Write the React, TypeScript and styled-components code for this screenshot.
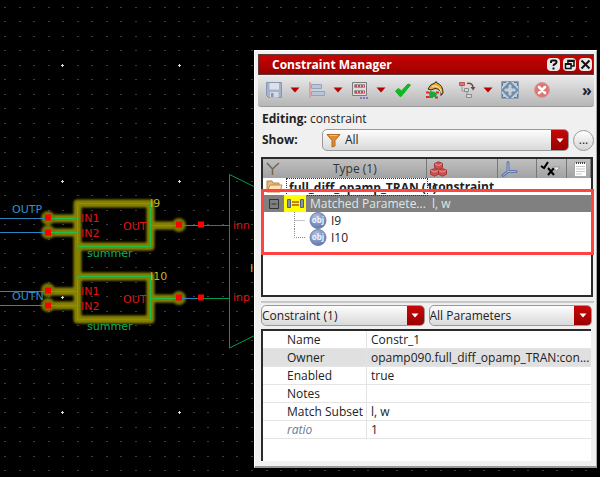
import React from "react";
import styled, { createGlobalStyle, css } from "styled-components";

const GlobalStyle = createGlobalStyle`
  *, *::before, *::after { box-sizing: border-box; }
  body {
    margin: 0;
    background: #000;
    color: #222;
    font: 12px/16px "Open Sans", "Noto Sans", sans-serif;
  }
  button, select { font: inherit; color: inherit; }
  button { padding: 0; border: 0; background: none; }
`;

/* ---------- Desktop and schematic ---------- */

const Desktop = styled.main`
  position: relative;
  display: grid;
  grid-template-columns: minmax(0, 1fr);
  min-height: 100vh;
  padding: 50px 3px 10px 254px;
  overflow: hidden;
`;

const Canvas = styled.svg`
  position: absolute;
  inset: 0;
  width: 100%;
  height: 100%;
  font: 11px "DejaVu Sans", sans-serif;
`;

const gridDots = (() => {
  let d = "";
  for (let row = 0; row < 75; row++) {
    for (let col = 0; col < 132; col++) {
      d += `M${Math.round(4 + col * 14.53)} ${Math.round(7 + row * 14.47) + 0.5}h2`;
    }
  }
  return d;
})();

const majorDots = (() => {
  let d = "";
  for (let row = 0; row < 9; row++) {
    for (let col = 0; col < 16; col++) {
      const x = Math.round(62 + col * 116.5);
      const y = Math.round(65 + row * 115.8);
      d += `M${x - 1} ${y + 0.5}h3M${x + 0.5} ${y - 1}v3`;
    }
  }
  return d;
})();

function Summer({ y, name }: { y: number; name: string }) {
  const shape = `M77.5 ${y}h73v43h-73zM48 ${y + 15}h29M48 ${y + 29}h29M150 ${y + 22}h29`;
  return (
    <g>
      <path d={`M0 ${y + 15}h48M0 ${y + 29}h48M179 ${y + 22}h22`} stroke="#2c86c0" fill="none" />
      <path d={`M201 ${y + 22}h28`} stroke="#009a4c" />
      <path d={shape} stroke="#1fbe4a" fill="none" />
      <g fill="#f00">
        <rect x="45" y={y + 11} width="6" height="6" />
        <rect x="45" y={y + 26} width="6" height="6" />
        <rect x="176" y={y + 18} width="6" height="6" />
        <rect x="198" y={y + 18} width="6" height="6" />
      </g>
      <g fill="#e01414">
        <text x="81" y={y + 18}>IN1</text>
        <text x="81" y={y + 33}>IN2</text>
        <text x="123" y={y + 26}>OUT</text>
      </g>
      <text x="87" y={y + 53} fill="#10b054">summer</text>
      <text x="150" y={y + 3} fill="#c4b61c">{name}</text>
    </g>
  );
}

const glowShape = [203.5, 276.5]
  .map((y) => `M77.5 ${y}h73v43h-73zM48 ${y + 15}h29M48 ${y + 29}h29M150 ${y + 22}h29`)
  .join("") + "M77.5 246v30";

const glowPins = [
  [48, 218], [48, 232], [48, 290], [48, 305], [179, 225], [179, 298],
];

function Schematic() {
  return (
    <Canvas aria-label="Schematic">
      <defs>
        <filter id="halo" x="-10%" y="-10%" width="120%" height="120%">
          <feGaussianBlur stdDeviation="1.3" />
        </filter>
      </defs>
      <path d={gridDots} stroke="#3d3d47" />
      <path d={majorDots} stroke="#dcdcdc" />
      <g filter="url(#halo)">
        <path d={glowShape} stroke="#868200" strokeWidth="8" strokeLinejoin="round" fill="none" />
        {glowPins.map(([cx, cy]) => (
          <circle key={`${cx}-${cy}`} cx={cx} cy={cy} r="7" fill="#7a7600" />
        ))}
      </g>
      <path d="M229.5 174.500V348L405 261z" stroke="#009a4c" fill="none" />
      <Summer y={203.5} name="I9" />
      <Summer y={276.5} name="I10" />
      <g fill="#3490c8">
        <text x="12" y="213">OUTP</text>
        <text x="12" y="300">OUTN</text>
      </g>
      <g fill="#e01414">
        <text x="233" y="229">inn</text>
        <text x="233" y="301">inp</text>
      </g>
      <text x="250" y="272" fill="#c4b61c">I</text>
    </Canvas>
  );
}

/* ---------- Window frame ---------- */

const Window = styled.section`
  position: relative;
  display: flex;
  flex-direction: column;
  min-width: 0;
  padding: 3px 2px 5px 3px;
  background: #f0f0f0;
  border: 1px solid #fff;
  border-right-color: #aaa;
  border-bottom: 2px solid #999;
`;

const TitleBar = styled.header`
  display: flex;
  align-items: center;
  gap: 3px;
  height: 21px;
  padding: 0 1px 0 13px;
  background: linear-gradient(#c80404, #9c0000);
  border: 1px solid #5e3a3a;
`;

const Title = styled.h1`
  flex: 1;
  margin: 0;
  font-size: 12px;
  line-height: 19px;
  color: #fff;
`;

const TitleButton = styled.button`
  display: grid;
  place-items: center;
  width: 13px;
  height: 13px;
  border-radius: 4px;
  background: #e8e8e8;
`;

const ToolBar = styled.div`
  display: flex;
  align-items: center;
  gap: 8px;
  height: 31px;
  margin-top: 1px;
  padding: 0 2px 2px 7px;
  background: linear-gradient(#e8e8e8, #b6b6b6);
  border-bottom: 1px solid #9a9a9a;
  border-radius: 3px;
`;

const ToolGroup = styled.div`
  display: flex;
  align-items: center;
  gap: 7px;
`;

const ToolButton = styled.button<{ $apart?: boolean }>`
  display: block;
  width: 18px;
  height: 18px;
  margin-left: ${(p) => (p.$apart ? "6px" : "0")};
`;

const MenuButton = styled.button`
  display: grid;
  place-items: center;
  width: 10px;
  height: 18px;
`;

const MoreButton = styled.button`
  margin-left: auto;
  width: 10px;
  font-size: 16px;
  font-weight: bold;
`;

const Glyph = styled.svg`
  display: block;
  flex: none;
`;

function ToolMenu({ label }: { label: string }) {
  return (
    <MenuButton aria-label={label}>
      <Glyph width="10" height="6"><path d="M.5 .5h9L5 5.500z" fill="#b80000" /></Glyph>
    </MenuButton>
  );
}

/* ---------- Fields ---------- */

const Info = styled.p`
  margin: 4px 0 0 4px;
  line-height: 16px;
`;

const FilterRow = styled.div`
  display: flex;
  align-items: center;
  gap: 4px;
  margin: 2px 0 0 4px;
`;

const FieldLabel = styled.label`
  width: 56px;
  font-weight: bold;
`;

const Combo = styled.div<{ $icon?: boolean }>`
  flex: 1;
  min-width: 0;
  display: grid;
  grid-template-columns: ${(p) => (p.$icon ? "21px" : "0")} minmax(0, 1fr) 17px;
  align-items: center;
  height: ${(p) => (p.$icon ? "22px" : "21px")};
  background: linear-gradient(#fdfdfd, #d9d9d9);
  border: 1px solid #999;
  border-radius: 5px;
  overflow: hidden;

  select {
    grid-area: 1 / 1 / 2 / 4;
    height: 100%;
    padding: 0 0 0 ${(p) => (p.$icon ? "22px" : "0")};
    background: none;
    border: 0;
    appearance: none;
  }
`;

const ComboIcon = styled.span`
  grid-area: 1 / 1;
  justify-self: center;
  pointer-events: none;
`;

const ComboArrow = styled.span`
  grid-area: 1 / 3;
  display: grid;
  place-items: center;
  height: 100%;
  background: linear-gradient(#c80808, #990000);
  pointer-events: none;
`;

const BrowseButton = styled.button`
  width: 21px;
  height: 21px;
  border: 1px solid #999;
  border-radius: 50%;
  background: linear-gradient(#fff, #d4d4d4);
  line-height: 18px;
`;

function DropArrow() {
  return (
    <ComboArrow>
      <Glyph width="8" height="5"><path d="M.5 .5h7L4 4.500z" fill="#fff" /></Glyph>
    </ComboArrow>
  );
}

/* ---------- Tables ---------- */

const frame = css`
  border: 1px solid #555;
  border-top: 2px solid #2b2b2b;
  border-left: 2px solid #2b2b2b;
  background: #fff;
`;

const TreeFrame = styled.div`
  ${frame}
  position: relative;
  height: 140px;
  margin: 6px 1px 0 3px;
  border-bottom: 2px solid #2b2b2b;
  border-right: 2px solid #2b2b2b;
`;

const Table = styled.table`
  width: 100%;
  table-layout: fixed;
  border-collapse: separate;
  border-spacing: 0;

  th, td {
    padding: 0;
    font-weight: normal;
    text-align: left;
    white-space: nowrap;
  }
`;

const HeadCell = styled.th<{ $width?: number }>`
  width: ${(p) => (p.$width ? `${p.$width}px` : "auto")};
  height: 19px;
  background: linear-gradient(#c0c0c0, #a2a2a2);
  border-right: 1px solid #777;
  color: #333;
`;

const HeadBody = styled.div<{ $middle?: boolean }>`
  display: flex;
  align-items: center;
  gap: 53px;
  height: 19px;
  padding-left: 3px;
  justify-content: ${(p) => (p.$middle ? "center" : "flex-start")};
`;

const TreeRow = styled.tr<{ $selected?: boolean; $folder?: boolean }>`
  height: 17px;
  line-height: 17px;
  color: ${(p) => (p.$selected ? "#dce8e4" : "#222")};
  background: ${(p) => (p.$selected ? "#808080" : "#fff")};

  && td { font-weight: ${(p) => (p.$folder ? "bold" : "normal")}; }
`;

const TreeItem = styled.div<{ $depth: number }>`
  display: flex;
  align-items: center;
  gap: 4px;
  height: 17px;
  padding-left: ${(p) => [3, 4, 30][p.$depth]}px;
`;

const FolderName = styled.span`
  flex: 1;
  min-width: 0;
  height: 16px;
  padding-left: 2px;
  outline: 1px dotted #333;
`;

const MatchBadge = styled.span`
  display: grid;
  place-items: center;
  flex: none;
  width: 22px;
  height: 17px;
  background: #ffff00;
`;

const Expander = styled.button`
  flex: none;
  width: 13px;
  height: 13px;
`;

const Value = styled.td`
  && { padding-left: 5px; }
`;

const Highlight = styled.div`
  position: absolute;
  top: 30px;
  left: -2px;
  right: -3px;
  height: 66px;
  border: 3px solid #ff4242;
  pointer-events: none;
`;

const Splitter = styled.div`
  height: 2px;
  margin: 4px 0 2px 3px;
  background: #c8c8c8;
`;

const ComboPair = styled.div`
  display: flex;
  gap: 4px;
  margin: 0 2px 0 3px;
`;

const PropertyFrame = styled.div`
  ${frame}
  flex: 1;
  min-height: 132px;
  margin: 3px 3px 0 3px;
  border-right: 0;
  border-bottom: 0;
`;

const PropertyRow = styled.tr<{ $shaded?: boolean }>`
  height: 18px;
  background: ${(p) => (p.$shaded ? "#e0e0e0" : "#fff")};

  && th, && td { border-bottom: 1px solid #e4e4e4; line-height: 17px; }
  && td { padding-left: 4px; overflow: hidden; text-overflow: ellipsis; }
`;

const PropertyName = styled.th<{ $custom?: boolean }>`
  width: 104px;
  && { padding-left: 24px; }
  border-right: 1px solid #e4e4e4;
  color: ${(p) => (p.$custom ? "#607d98" : "inherit")};
  font-style: ${(p) => (p.$custom ? "italic" : "normal")};
`;

function ObjectIcon() {
  return (
    <Glyph width="18" height="17" aria-hidden="true">
      <defs>
        <radialGradient id="ball" cx=".4" cy=".3" r=".7">
          <stop offset="0" stopColor="#b4c2e0" />
          <stop offset="1" stopColor="#6179ab" />
        </radialGradient>
      </defs>
      <circle cx="9" cy="8.500" r="8" fill="url(#ball)" stroke="#7185ae" />
      <text x="9" y="11" fontSize="8" fontWeight="bold" textAnchor="middle" fill="#eef2fb">obj</text>
    </Glyph>
  );
}

function Branch({ last }: { last?: boolean }) {
  return (
    <Glyph width="12" height="17" aria-hidden="true">
      <path d={last ? "M1.500 0v8.500H12" : "M1.500 0v17M1.500 8.500H12"} fill="none" stroke="#888" strokeDasharray="1 1" />
    </Glyph>
  );
}

const properties = [
  { name: "Name", value: "Constr_1" },
  { name: "Owner", value: "opamp090.full_diff_opamp_TRAN:con...", shaded: true },
  { name: "Enabled", value: "true" },
  { name: "Notes", value: "" },
  { name: "Match Subset", value: "l, w" },
  { name: "ratio", value: "1", custom: true },
];

export default function App() {
  return (
    <Desktop>
      <GlobalStyle />
      <Schematic />
      <Window aria-label="Constraint Manager">
        <TitleBar>
          <Title>Constraint Manager</Title>
          <TitleButton aria-label="Help">
            <Glyph width="11" height="11"><path d="M3 4V2.500Q3 1.500 4.500 1.500H7Q8.500 1.500 8.500 3T7 5Q5.500 5.300 5.500 7M5.500 8.500v2" fill="none" stroke="#111" strokeWidth="2" /></Glyph>
          </TitleButton>
          <TitleButton aria-label="Restore">
            <Glyph width="11" height="11"><path d="M4 4V1.500h6V7H7.500M1.500 5h5.500v4.500H1.500z" fill="none" stroke="#111" strokeWidth="1.500" /><path d="M3.500 1h7v2h-7zM1 4h6.500v2H1z" fill="#111" /></Glyph>
          </TitleButton>
          <TitleButton aria-label="Close">
            <Glyph width="11" height="11"><path d="M1.500 1.500l8 8M9.500 1.500l-8 8" stroke="#111" strokeWidth="2" /></Glyph>
          </TitleButton>
        </TitleBar>

        <ToolBar role="toolbar">
          <ToolGroup>
            <ToolButton aria-label="Save">
              <Glyph width="18" height="18">
                <path d="M1.500 1.500h15v15h-13l-2-2z" fill="#a5b2c9" stroke="#8797b3" />
                <path d="M4.500 2h9.500v6.500H4.500z" fill="#dde2ea" />
                <path d="M5 11h8.500v5.500H5z" fill="#d6dce6" /><path d="M6 12h2.500v4H6z" fill="#8797b3" />
              </Glyph>
            </ToolButton>
            <ToolMenu label="Save options" />
          </ToolGroup>
          <ToolGroup>
            <ToolButton aria-label="Align">
              <Glyph width="18" height="18">
                <path d="M2 1v16" stroke="#d9a3a5" strokeWidth="2" />
                <path d="M3.500 3.500h10v4h-10zM3.500 10.500h13v4h-13z" fill="#b9c5d8" stroke="#94a3bc" />
              </Glyph>
            </ToolButton>
            <ToolMenu label="Align options" />
          </ToolGroup>
          <ToolGroup>
            <ToolButton aria-label="Constraint groups">
              <Glyph width="18" height="18">
                <path d="M1.500 1.500h14v13h-14z" fill="#dedede" stroke="#7b7b7b" />
                <path d="M3.500 3.500h10v3h-10zM3.500 9.500h10v3h-10z" fill="#c9c9c9" stroke="#999" />
                <path d="M4 5h10M4 11h10" stroke="#c8485a" strokeWidth="2" strokeDasharray="2 1" />
                <path d="M9 17h9" stroke="#7a7ad0" strokeWidth="2" strokeDasharray="2 1" />
              </Glyph>
            </ToolButton>
            <ToolMenu label="Constraint group options" />
          </ToolGroup>
          <ToolButton aria-label="Apply">
            <Glyph width="18" height="18"><path d="M1.500 10l3-2.500 3 2.500L14 3l2.500 1-9 11-1.500.5z" fill="#10ba20" stroke="#0ab31b" strokeLinejoin="round" /></Glyph>
          </ToolButton>
          <ToolButton aria-label="Find" $apart>
            <Glyph width="18" height="18">
              <path d="M2 8Q4 3 9 2l1-1.500 1 1.500Q17 4 17 12l-2 2.500V11Q13 7 9 7.500L5 9z" fill="#e9ad3e" stroke="#35290e" />
              <path d="M6 5.500Q10 3.500 14 8l1.500 4" fill="none" stroke="#fff0a5" />
              <path d="M4 10l5 1 2 2-1 3H5l-2-2z" fill="#19a83b" />
              <path d="M0 11.500h3M0 16h3M10 11.500h3M9 16.500h3" stroke="#df2929" strokeWidth="2" />
              <path d="M3 12h3M3 16h4" stroke="#19a83b" strokeWidth="2" />
            </Glyph>
          </ToolButton>
          <ToolGroup>
            <ToolButton aria-label="Hierarchy" $apart>
              <Glyph width="18" height="18">
                <path d="M4 5v5h3M9 11v4h3" fill="none" stroke="#999" />
                <path d="M1.500 1.500h5v3h-5z" fill="#d97777" stroke="#c44e4e" />
                <path d="M6.500 7.500h4v3h-4zM8.500 13.500h5v3h-5z" fill="#d8d8d8" stroke="#8c8c8c" />
                <path d="M9 2.500Q15 1.500 15 7" fill="none" stroke="#6e4b4b" strokeWidth="1.500" /><path d="M12.500 6h5L15 9.500z" fill="#6e4b4b" />
              </Glyph>
            </ToolButton>
            <ToolMenu label="Hierarchy options" />
          </ToolGroup>
          <ToolButton aria-label="Zoom to fit">
            <Glyph width="18" height="18">
              <path d="M.5 .5h17v17H.5z" fill="#c3ced9" stroke="#8da2b9" />
              <path d="M9 1.500l7.500 7.500-7.500 7.500L1.500 9z" fill="none" stroke="#6f8cab" strokeWidth="2" />
              <path d="M6 7.500V6h1.500M10.500 6H12v1.500M12 10.500V12h-1.500M7.500 12H6v-1.500" fill="none" stroke="#6f8cab" strokeWidth="2" />
              <path d="M1.500 5V1.500H5M13 1.500h3.500V5M1.500 13v3.500H5M13 16.500h3.500V13" fill="none" stroke="#5c7898" />
            </Glyph>
          </ToolButton>
          <ToolButton aria-label="Delete" $apart>
            <Glyph width="18" height="18">
              <circle cx="9" cy="9" r="7.500" fill="#dc7777" stroke="#d99b9b" />
              <path d="M6 6l6 6M12 6l-6 6" stroke="#fff" strokeWidth="2.500" strokeLinecap="round" />
            </Glyph>
          </ToolButton>
          <MoreButton aria-label="More tools">»</MoreButton>
        </ToolBar>

        <Info><b>Editing:</b> constraint</Info>
        <FilterRow>
          <FieldLabel htmlFor="show">Show:</FieldLabel>
          <Combo $icon>
            <ComboIcon>
              <Glyph width="15" height="15"><path d="M1 1.500h13L9 7.500V13l-3 1V7.500z" fill="#dc8b35" stroke="#b96b20" /><path d="M3.500 2.500h8" stroke="#f4bf7c" /></Glyph>
            </ComboIcon>
            <select id="show" defaultValue="All"><option>All</option></select>
            <DropArrow />
          </Combo>
          <BrowseButton aria-label="Browse filters">...</BrowseButton>
        </FilterRow>

        <TreeFrame>
          <Table>
            <thead>
              <tr>
                <HeadCell>
                  <HeadBody>
                    <Glyph width="14" height="14"><path d="M1 1l5.500 6V13M13 1L6.500 7" fill="none" stroke="#75644e" strokeWidth="1.500" /></Glyph>
                    Type (1)
                  </HeadBody>
                </HeadCell>
                <HeadCell $width={71} aria-label="Parameters">
                  <HeadBody>
                    <Glyph width="17" height="16">
                      <g fill="#c85252" stroke="#a53838">
                        <path d="M8.500 .8l4 1.700v4l-4 2-4-2v-4z" /><path d="M4.500 7.500l4 1.700v4l-4 2-4-2v-4z" /><path d="M12.500 7.500l4 1.700v4l-4 2-4-2v-4z" />
                      </g>
                      <path d="M5 3l3.500 1.500L12 3M1 9.500L4.500 11 8 9.500M9 9.500l3.500 1.500L16 9.500" fill="none" stroke="#ee9999" />
                    </Glyph>
                  </HeadBody>
                </HeadCell>
                <HeadCell $width={39} aria-label="Axes">
                  <HeadBody>
                    <Glyph width="17" height="16"><path d="M7 1.500v9M7 10.500l8 0M7 10.500l-5 4" stroke="#6179aa" strokeWidth="3" strokeLinecap="round" /><path d="M7 1.500v9h8M7 10.500l-5 4" fill="none" stroke="#a3b7dc" /></Glyph>
                  </HeadBody>
                </HeadCell>
                <HeadCell $width={30} aria-label="Status">
                  <HeadBody>
                    <Glyph width="22" height="16"><path d="M1 5l3 2 4-6M8 7l6 7M14 7l-6 7" fill="none" stroke="#000" strokeWidth="2" /><path d="M13 6h7l-3.500 4z" fill="#eee" stroke="#999" /></Glyph>
                  </HeadBody>
                </HeadCell>
                <HeadCell $width={24} aria-label="Notes">
                  <HeadBody $middle>
                    <Glyph width="13" height="16"><path d="M.5 1.500h12v14H.5z" fill="#fff" stroke="#aaa" /><path d="M2 2h10" stroke="#444" strokeWidth="2" strokeDasharray="1 1" /><path d="M2 5.500h9M2 8h9M2 10.500h9M2 13h6" stroke="#c8c8c8" /></Glyph>
                  </HeadBody>
                </HeadCell>
              </tr>
            </thead>
            <tbody>
              <TreeRow $folder>
                <td>
                  <TreeItem $depth={0}>
                    <Glyph width="17" height="15"><path d="M1 13V2h5l1 2h6v4" fill="#e7b878" stroke="#b9854b" /><path d="M1 13l3-7h12l-2 7z" fill="#ffe0ae" stroke="#bd894e" /></Glyph>
                    <FolderName>full_diff_opamp_TRAN (1)</FolderName>
                  </TreeItem>
                </td>
                <Value colSpan={4}>constraint</Value>
              </TreeRow>
              <TreeRow $selected>
                <td>
                  <TreeItem $depth={1}>
                    <Expander aria-label="Collapse">
                      <Glyph width="13" height="13"><path d="M2.500 2.500h9v9h-9zM4.500 7h5" fill="none" stroke="#333" /></Glyph>
                    </Expander>
                    <MatchBadge>
                      <Glyph width="17" height="10"><path d="M.5 .5h3v8h-3zM13.500 .5h3v8h-3z" fill="#8893a8" stroke="#555d70" /><path d="M5 3h7M5 6h7" stroke="#b35b12" strokeWidth="1.500" /></Glyph>
                    </MatchBadge>
                    Matched Paramete...
                  </TreeItem>
                </td>
                <Value colSpan={4}>l, w</Value>
              </TreeRow>
              <TreeRow>
                <td><TreeItem $depth={2}><Branch /><ObjectIcon />I9</TreeItem></td>
                <td colSpan={4} />
              </TreeRow>
              <TreeRow>
                <td><TreeItem $depth={2}><Branch last /><ObjectIcon />I10</TreeItem></td>
                <td colSpan={4} />
              </TreeRow>
            </tbody>
          </Table>
          <Highlight />
        </TreeFrame>

        <Splitter />
        <ComboPair>
          <Combo>
            <select aria-label="Constraint scope" defaultValue="Constraint (1)"><option>Constraint (1)</option></select>
            <DropArrow />
          </Combo>
          <Combo>
            <select aria-label="Parameter filter" defaultValue="All Parameters"><option>All Parameters</option></select>
            <DropArrow />
          </Combo>
        </ComboPair>

        <PropertyFrame>
          <Table>
            <tbody>
              {properties.map((p) => (
                <PropertyRow key={p.name} $shaded={p.shaded}>
                  <PropertyName scope="row" $custom={p.custom}>{p.name}</PropertyName>
                  <td>{p.value}</td>
                </PropertyRow>
              ))}
            </tbody>
          </Table>
        </PropertyFrame>
      </Window>
    </Desktop>
  );
}
